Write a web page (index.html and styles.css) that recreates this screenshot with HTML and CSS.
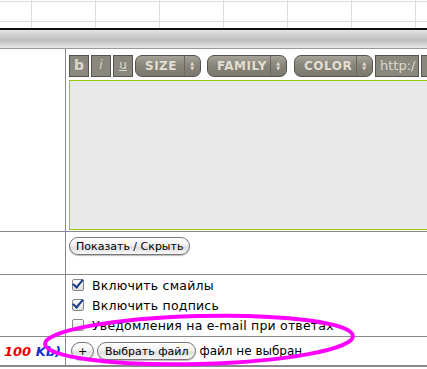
FILE: index.html
```html
<!DOCTYPE HTML>
<html>
<head>
<meta charset="utf-8">
<title>Ответ</title>
<link rel="stylesheet" href="styles.css">
</head>
<body>
	<div class="sheet"></div>
	<div class="bar"></div>
	<div class="form">
		<div class="lbl"></div>
		<div class="fld editor">
			<div class="tools">
				<span class="tb b">b</span>
				<span class="tb i">i</span>
				<span class="tb u">u</span>
				<span class="sel s1">SIZE<em>&#9650;<br>&#9660;</em></span>
				<span class="sel s2">FAMILY<em>&#9650;<br>&#9660;</em></span>
				<span class="sel s3">COLOR<em>&#9650;<br>&#9660;</em></span>
				<span class="tb url">http:/</span>
				<span class="tb more"></span>
			</div>
			<div class="area"></div>
		</div>

		<div class="lbl"></div>
		<div class="fld toggle"><button class="mac">Показать / Скрыть</button></div>

		<div class="lbl"></div>
		<div class="fld checks">
			<label><span class="cb on"></span>Включить смайлы</label>
			<label><span class="cb on"></span>Включить подпись</label>
			<label><span class="cb"></span>Уведомления на e-mail при ответах</label>
		</div>

		<div class="lbl size"><span class="red">100</span> <span class="blue">Kb)</span></div>
		<div class="fld file">
			<button class="mac plus">+</button>
			<button class="mac">Выбрать файл</button>
			<span>файл не выбран</span>
		</div>
	</div>
	<svg class="ring" width="427" height="369" viewBox="0 0 427 369">
		<ellipse cx="199" cy="340" rx="154" ry="24" transform="rotate(-1.5 199 340)" fill="none" stroke="#f0f" stroke-width="4"/>
	</svg>
</body>
</html>
```
FILE: styles.css
```css
*{padding:0;margin:0;box-sizing:border-box}
body{font-family:"DejaVu Sans",Verdana,sans-serif;font-size:12px;color:#000;background:#fff;width:427px;height:369px;overflow:hidden;position:relative}

.sheet{height:28px;background:
	repeating-linear-gradient(90deg,transparent 0 31px,#ddd 31px 32px,transparent 32px 64px),
	linear-gradient(#fff 0 1px,#ddd 1px 2px,#fff 2px 21px,#ddd 21px 22px,#fff 22px);}
.bar{height:21px;border-top:2px solid #111;border-bottom:1px solid #999;background:linear-gradient(#e4e4e4,#c9c9c9 40%,#bdbdbd 55%,#e8e8e8);}

.form{display:grid;grid-template-columns:66px 1fr;grid-template-rows:183px 43px 62px 29px;border-bottom:1px solid #888;}
.lbl{border-right:1px solid #888;border-bottom:1px solid #888;}
.fld{border-bottom:1px solid #888;padding-left:3px;overflow:hidden;}

.tools{display:flex;gap:2px;margin-top:6px;height:22px;white-space:nowrap}
.tb{display:block;flex:none;width:20px;height:22px;background:#8a877f;border:1px solid #55534e;color:#ddd8cc;font-weight:bold;font-size:14px;text-align:center;line-height:19px}
.tb.i{font-style:italic;font-weight:normal;font-size:12px}
.tb.u{text-decoration:underline;font-weight:normal;font-size:12px}
.sel{display:flex;flex:none;align-items:center;height:22px;padding-left:9px;border:1px solid #55534e;border-radius:7px;background:linear-gradient(#a5a29a,#868379 50%,#7b786f);color:#e2ddd0;font-weight:bold;font-size:12px;letter-spacing:0.5px;}
.sel em{font-style:normal;font-size:5px;line-height:5px;text-align:center;margin-left:auto;width:16px;height:20px;border-left:1px solid #6a675f;padding-top:5px}
.s1{width:66px}
.s2{width:80px;margin-left:4px}
.s3{width:79px;margin-left:5px}
.tb.url{width:44px;font-weight:normal;font-size:13px;text-align:left;padding-left:4px;overflow:hidden}
.tb.more{width:20px}
.area{height:150px;margin-top:3px;background:#e9e9e9;border:1px solid #99cc00;border-right:none;}

.mac{font-family:"DejaVu Sans",Verdana,sans-serif;font-size:11px;height:18px;padding:0 7px;border:1px solid #777;border-radius:9px;background:linear-gradient(#fff,#f1f1f1 50%,#dcdcdc 55%,#f8f8f8);color:#000;box-shadow:0 1px 1px #bbb;white-space:nowrap}
.toggle .mac{margin-top:5px;padding:0 6px}

.checks{padding-top:0}
.checks label{display:flex;align-items:center;height:20px;gap:8px;font-size:12.5px;letter-spacing:0.2px}
.cb{width:12px;height:12px;border:1px solid #888;border-radius:2px;background:linear-gradient(#fff,#ddd);margin-left:3px;position:relative}
.cb.on::after{content:"";position:absolute;left:2px;top:-3px;width:4px;height:9px;border:solid #1a3d8f;border-width:0 2px 2px 0;transform:rotate(40deg)}

.size{font-weight:bold;font-style:italic;font-size:13px;text-align:right;padding-right:4px;padding-top:7px;white-space:nowrap}
.red{color:#e00}
.blue{color:#1133cc}
.file{display:flex;align-items:center;gap:3px;padding-left:5px}
.file .plus{width:23px;padding:0}
.file span{font-size:12px}

.ring{position:absolute;left:0;top:0;pointer-events:none}
```
